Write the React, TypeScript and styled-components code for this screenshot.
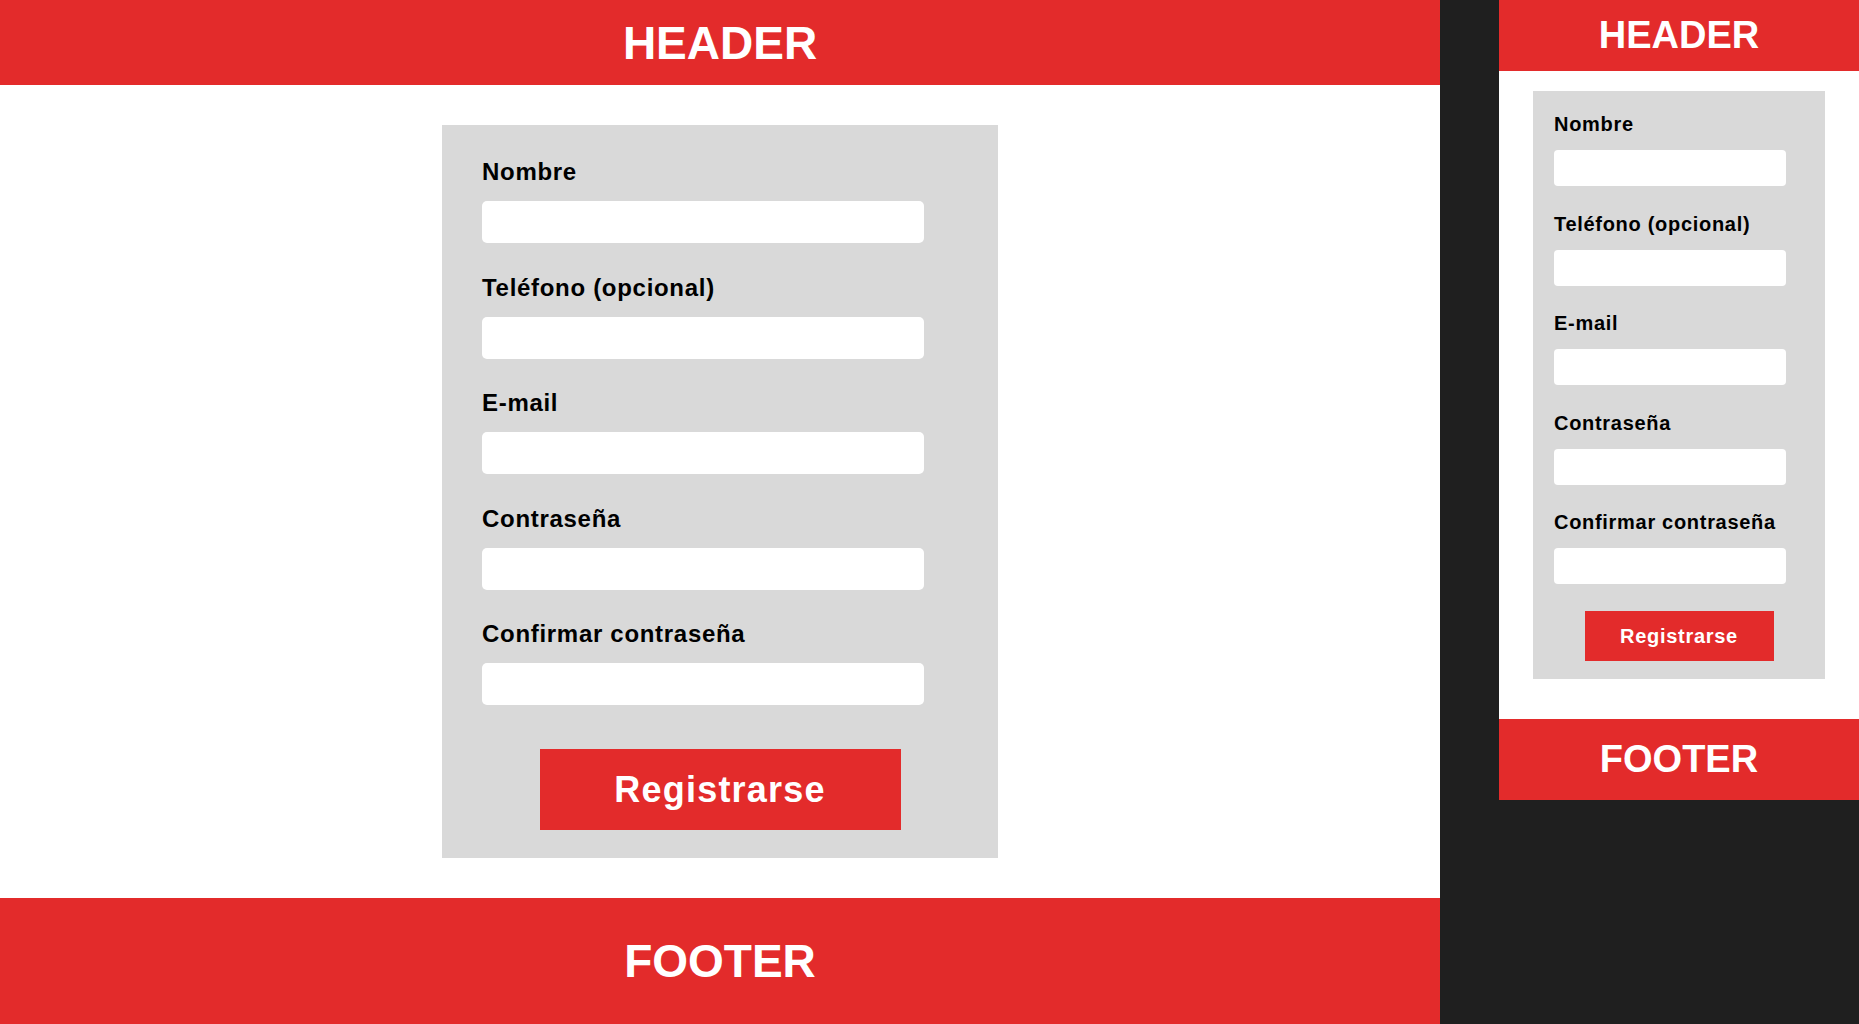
import React, { FC } from "react";
import styled, { createGlobalStyle } from "styled-components";

const RED = "#e32b2b";
const GREY = "#d9d9d9";
const DARK = "#1f1f1f";

type Variant = "desktop" | "mobile";

const sizes = {
  desktop: {
    frameW: 1440,
    headerH: 85,
    footerH: 126,
    title: 46,
    mainPad: "40px 0",
    cardW: 556,
    cardPad: "33px 40px 28px",
    label: 24,
    labelLine: 28,
    labelGap: 15,
    inputW: 442,
    inputH: 42,
    fieldGap: 30.6,
    radius: 5,
    btnW: 361,
    btnH: 81,
    btnFont: 36,
    btnSpacing: 1.2,
    btnTop: 44,
  },
  mobile: {
    frameW: 360,
    headerH: 71,
    footerH: 81,
    title: 38,
    mainPad: "20px 0 40px",
    cardW: 292,
    cardPad: "22px 21px 18px",
    label: 20,
    labelLine: 23,
    labelGap: 14,
    inputW: 232,
    inputH: 36,
    fieldGap: 26.5,
    radius: 4,
    btnW: 189,
    btnH: 50,
    btnFont: 20,
    btnSpacing: 0.7,
    btnTop: 27,
  },
};

const GlobalStyle = createGlobalStyle`
  * { box-sizing: border-box; }
  html, body { margin: 0; padding: 0; }
  body {
    background: ${DARK};
    font-family: "Liberation Sans", Arial, sans-serif;
  }
`;

const fields = [
  { id: "nombre", label: "Nombre", type: "text" },
  { id: "telefono", label: "Teléfono (opcional)", type: "tel" },
  { id: "email", label: "E-mail", type: "email" },
  { id: "password", label: "Contraseña", type: "password" },
  { id: "confirm", label: "Confirmar contraseña", type: "password" },
];

const RegisterView: FC<{ variant: Variant }> = ({ variant }) => {
  return (
    <Frame $v={variant}>
      <Bar $v={variant} $h={sizes[variant].headerH}>HEADER</Bar>
      <Main $v={variant}>
        <Card $v={variant}>
          {fields.map((f) => (
            <Field key={f.id} $v={variant}>
              <Label $v={variant} htmlFor={`${variant}-${f.id}`}>{f.label}</Label>
              <Input $v={variant} id={`${variant}-${f.id}`} type={f.type} />
            </Field>
          ))}
          <Button $v={variant} type="button">Registrarse</Button>
        </Card>
      </Main>
      <Bar $v={variant} $h={sizes[variant].footerH}>FOOTER</Bar>
    </Frame>
  );
};

export default function App() {
  return (
    <>
      <GlobalStyle />
      <Page>
        <RegisterView variant="desktop" />
        <RegisterView variant="mobile" />
      </Page>
    </>
  );
}

const Page = styled.div`
  display: flex;
  align-items: flex-start;
  gap: 59px;
  width: 100%;
  height: 1024px;
  overflow: hidden;
  background: ${DARK};
`;

const Frame = styled.div<{ $v: Variant }>`
  display: flex;
  flex-direction: column;
  flex-shrink: 0;
  width: ${({ $v }) => sizes[$v].frameW}px;
  background: white;
`;

const Bar = styled.div<{ $v: Variant; $h: number }>`
  display: flex;
  align-items: center;
  justify-content: center;
  flex-shrink: 0;
  height: ${({ $h }) => $h}px;
  background: ${RED};
  color: white;
  font-weight: 700;
  font-size: ${({ $v }) => sizes[$v].title}px;
`;

const Main = styled.main<{ $v: Variant }>`
  display: flex;
  justify-content: center;
  padding: ${({ $v }) => sizes[$v].mainPad};
`;

const Card = styled.form<{ $v: Variant }>`
  display: flex;
  flex-direction: column;
  width: ${({ $v }) => sizes[$v].cardW}px;
  padding: ${({ $v }) => sizes[$v].cardPad};
  background: ${GREY};
`;

const Field = styled.div<{ $v: Variant }>`
  display: flex;
  flex-direction: column;
  flex-shrink: 0;
  gap: ${({ $v }) => sizes[$v].labelGap}px;
  margin-bottom: ${({ $v }) => sizes[$v].fieldGap}px;
  &:last-of-type {
    margin-bottom: 0;
  }
`;

const Label = styled.label<{ $v: Variant }>`
  display: block;
  color: #000;
  font-weight: 700;
  font-size: ${({ $v }) => sizes[$v].label}px;
  line-height: ${({ $v }) => sizes[$v].labelLine}px;
  letter-spacing: 0.7px;
`;

const Input = styled.input<{ $v: Variant }>`
  display: block;
  flex-shrink: 0;
  width: ${({ $v }) => sizes[$v].inputW}px;
  height: ${({ $v }) => sizes[$v].inputH}px;
  margin: 0;
  border: none;
  border-radius: ${({ $v }) => sizes[$v].radius}px;
  background: white;
  outline: none;
  padding: 0 10px;
  font-family: inherit;
`;

const Button = styled.button<{ $v: Variant }>`
  align-self: center;
  flex-shrink: 0;
  width: ${({ $v }) => sizes[$v].btnW}px;
  height: ${({ $v }) => sizes[$v].btnH}px;
  margin-top: ${({ $v }) => sizes[$v].btnTop}px;
  border: none;
  background: ${RED};
  color: white;
  font-family: inherit;
  font-weight: 700;
  font-size: ${({ $v }) => sizes[$v].btnFont}px;
  letter-spacing: ${({ $v }) => sizes[$v].btnSpacing}px;
  cursor: pointer;
`;
